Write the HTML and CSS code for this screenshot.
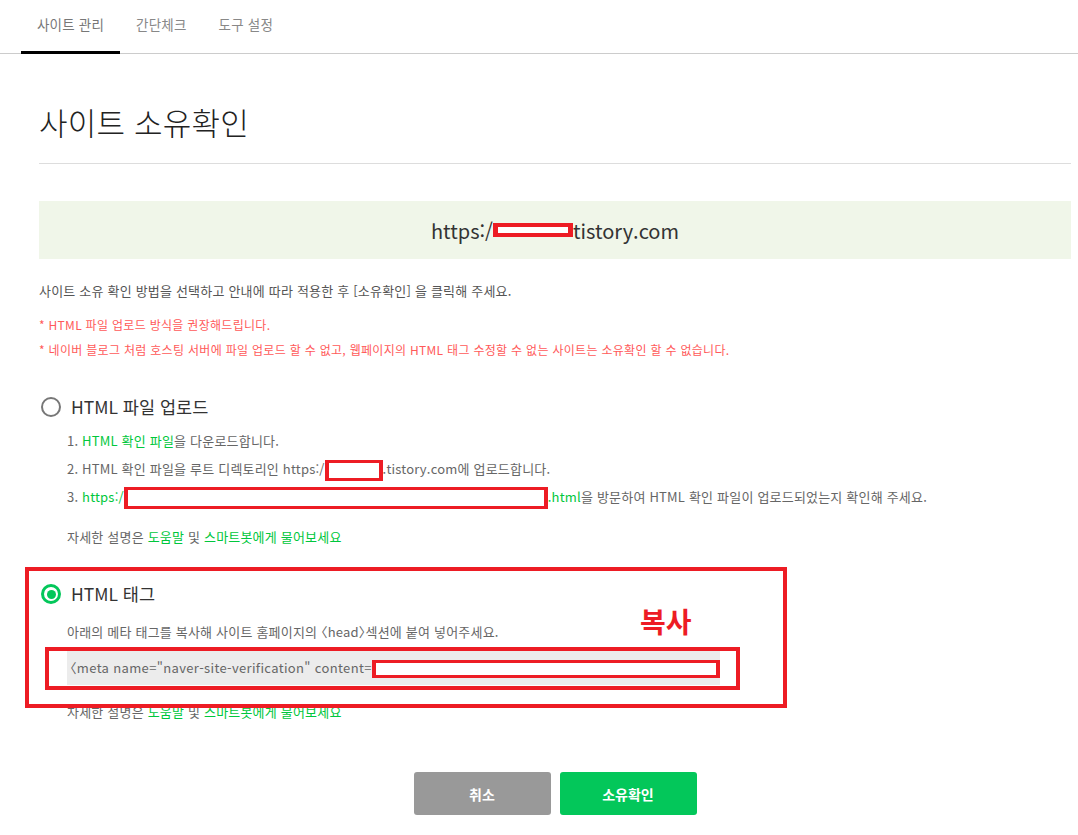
FILE: index.html
```html
<!DOCTYPE html>
<html lang="ko">
  <head>
    <meta charset="UTF-8" />
    <meta name="viewport" content="width=device-width, initial-scale=1.0" />
    <title>사이트 소유확인</title>
    <link rel="stylesheet" href="styles.css">
  </head>
  <body>
    <!-- 상단 탭 -->
    <div class="tabs">
      <a class="tab active">사이트 관리</a>
      <a class="tab">간단체크</a>
      <a class="tab">도구 설정</a>
    </div>

    <div class="content">
      <h1 class="page-title">사이트 소유확인</h1>

      <div class="site-url">https:/<span class="redact redact-site"></span>tistory.com</div>

      <p class="desc">사이트 소유 확인 방법을 선택하고 안내에 따라 적용한 후 [소유확인] 을 클릭해 주세요.</p>
      <p class="note">* HTML 파일 업로드 방식을 권장해드립니다.</p>
      <p class="note">* 네이버 블로그 처럼 호스팅 서버에 파일 업로드 할 수 없고, 웹페이지의 HTML 태그 수정할 수 없는 사이트는 소유확인 할 수 없습니다.</p>

      <!-- HTML 파일 업로드 -->
      <div class="method">
        <label class="method-title"><span class="radio"></span>HTML 파일 업로드</label>
        <ol class="steps">
          <li>1. <a class="link">HTML 확인 파일</a>을 다운로드합니다.</li>
          <li>2. HTML 확인 파일을 루트 디렉토리인 https:/<span class="redact redact-dir"></span>.tistory.com에 업로드합니다.</li>
          <li>3. <a class="link">https:/<span class="redact redact-file"></span>.html</a>을 방문하여 HTML 확인 파일이 업로드되었는지 확인해 주세요.</li>
        </ol>
        <p class="help">자세한 설명은 <a class="link">도움말</a> 및 <a class="link">스마트봇에게 물어보세요</a></p>
      </div>

      <!-- HTML 태그 -->
      <div class="method method-tag">
        <label class="method-title"><span class="radio checked"></span>HTML 태그</label>
        <p class="guide">아래의 메타 태그를 복사해 사이트 홈페이지의 〈head〉섹션에 붙여 넣어주세요.</p>
        <div class="code">〈meta name="naver-site-verification" content=<span class="redact redact-meta"></span></div>
        <p class="help">자세한 설명은 <a class="link">도움말</a> 및 <a class="link">스마트봇에게 물어보세요</a></p>

        <!-- 표시용 빨간 박스 -->
        <div class="mark mark-outer"></div>
        <div class="mark mark-code"></div>
        <div class="mark-label">복사</div>
      </div>

      <div class="buttons">
        <button class="btn btn-cancel">취소</button>
        <button class="btn btn-ok">소유확인</button>
      </div>
    </div>
  </body>
</html>
```

FILE: styles.css
```css
body {
  margin: 0;
  font-family: "Noto Sans CJK KR", "Noto Sans", sans-serif;
  background: #fff;
  color: #333;
}

p {
  margin: 0;
}

/* 탭 */
.tabs {
  display: flex;
  padding-left: 21px;
  height: 53px;
  border-bottom: 1px solid #ccc;
}

.tab {
  display: block;
  padding: 15px 16px 0;
  font-size: 13.5px;
  line-height: 18px;
  letter-spacing: 0.2px;
  color: #888;
  box-sizing: border-box;
  height: 54px;
}

.tab.active {
  color: #777;
  border-bottom: 3px solid #000;
}

/* 본문 */
.content {
  width: 1032px;
  margin-left: 39px;
}

.page-title {
  margin: 0;
  padding: 48px 0 21px;
  font-size: 31px;
  line-height: 40px;
  font-weight: 300;
  letter-spacing: 0.2px;
  color: #222;
  border-bottom: 1px solid #ddd;
}

.site-url {
  margin-top: 37px;
  height: 58px;
  background: #f0f6e9;
  display: flex;
  align-items: center;
  justify-content: center;
  font-size: 20px;
  color: #333;
}

.desc {
  margin-top: 22px;
  font-size: 13px;
  line-height: 20px;
  letter-spacing: 0.2px;
  color: #555;
}

.note {
  margin-top: 5px;
  font-size: 12px;
  line-height: 20px;
  letter-spacing: 0.3px;
  color: #ff5a5a;
}

.desc + .note {
  margin-top: 14px;
}

/* 확인 방법 */
.method {
  margin-top: 35px;
}

.method-title {
  display: flex;
  align-items: center;
  font-size: 17.5px;
  line-height: 24px;
  color: #333;
}

.radio {
  width: 16px;
  height: 16px;
  border: 2px solid #777;
  border-radius: 50%;
  margin: 0 10px 0 2px;
  box-sizing: content-box;
  display: flex;
  align-items: center;
  justify-content: center;
}

.radio.checked {
  border: 3px solid #03c75a;
  width: 14px;
  height: 14px;
}

.radio.checked::after {
  content: "";
  width: 9px;
  height: 9px;
  border-radius: 50%;
  background: #03c75a;
}

.steps {
  list-style: none;
  margin: 8px 0 0;
  padding: 0 0 0 28px;
  font-size: 13px;
  line-height: 28px;
  letter-spacing: 0.2px;
  color: #666;
}

.link {
  color: #00c73c;
}

.help {
  margin-top: 16px;
  padding-left: 28px;
  font-size: 13px;
  line-height: 20px;
  letter-spacing: 0.2px;
  color: #666;
}

/* 꺾쇠 괄호는 반각으로 (halt) */
.guide {
  margin-top: 16px;
  padding-left: 28px;
  font-size: 13px;
  line-height: 20px;
  letter-spacing: 0.2px;
  color: #666;
  font-feature-settings: "halt";
}

.code {
  margin: 8px 0 0 28px;
  width: 653px;
  height: 35px;
  background: #ececec;
  padding-left: 3px;
  box-sizing: border-box;
  font-size: 13px;
  line-height: 35px;
  white-space: nowrap;
  letter-spacing: 0.35px;
  color: #666;
  font-feature-settings: "halt";
}

.method-tag .help {
  margin-top: 17px;
}

/* 가림 박스 */
.redact {
  display: inline-block;
  box-sizing: border-box;
  border: 3px solid #ed1c24;
  background: #fff;
  vertical-align: middle;
}

.redact-site {
  width: 80px;
  height: 14px;
  border-width: 4px 5px;
}

.redact-dir {
  width: 58px;
  height: 21px;
  border-width: 3px 4px;
}

.redact-file {
  width: 424px;
  height: 22px;
  border-width: 3px 4px;
}

.redact-meta {
  width: 348px;
  height: 18px;
  border-width: 3px 4px;
}

/* 주석 표시 */
.method-tag {
  position: relative;
}

.mark {
  position: absolute;
  border: 4px solid #ed1c24;
  box-sizing: border-box;
}

.mark-outer {
  left: -14px;
  top: -15px;
  width: 762px;
  height: 141px;
}

.mark-code {
  left: 6px;
  top: 65px;
  width: 695px;
  height: 43px;
}

.mark-label {
  position: absolute;
  left: 601px;
  top: 21px;
  font-size: 28px;
  line-height: 36px;
  font-weight: bold;
  color: #ed1c24;
}

/* 버튼 */
.buttons {
  display: flex;
  justify-content: center;
  gap: 9px;
  margin-top: 50px;
}

.btn {
  width: 137px;
  height: 43px;
  border: none;
  border-radius: 3px;
  color: #fff;
  font-family: inherit;
  font-size: 14px;
  font-weight: bold;
}

.btn-cancel {
  background: #999;
}

.btn-ok {
  background: #03c75a;
}
```
